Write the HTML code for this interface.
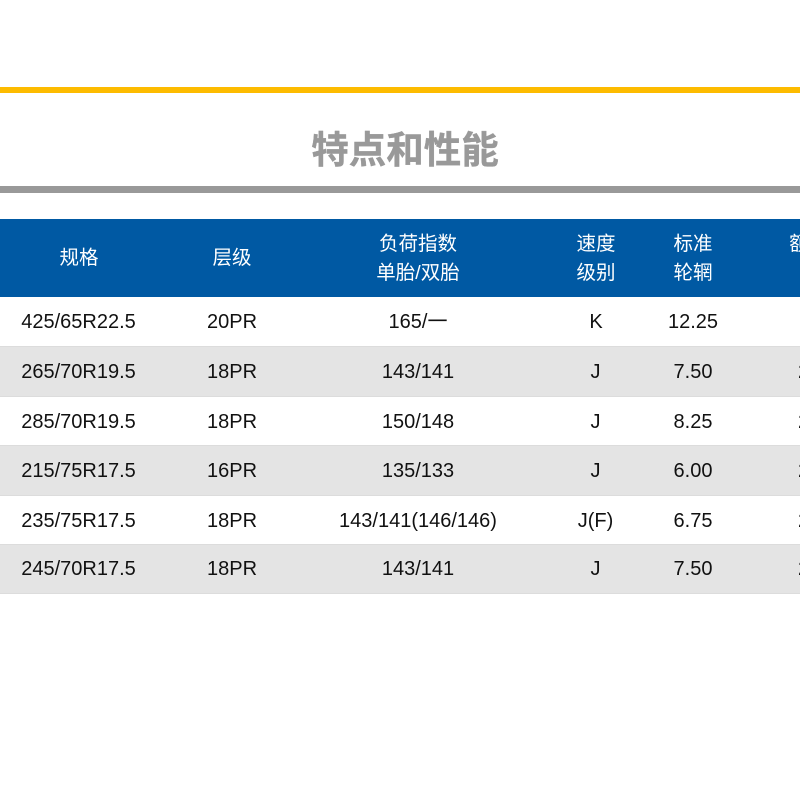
<!DOCTYPE html>
<html lang="zh">
<head>
<meta charset="utf-8">
<title>特点和性能</title>
<style>
html,body{margin:0;padding:0;background:#fff;}
body{width:800px;height:800px;overflow:hidden;position:relative;font-family:"Liberation Sans","Noto Sans CJK SC",sans-serif;}
.bar{position:absolute;left:0;width:800px;}
.title{position:absolute;left:0;width:810px;top:127px;height:46px;line-height:46px;text-align:center;font-size:37.5px;font-weight:bold;color:#999;-webkit-text-stroke:.4px #999;}
.row{position:absolute;left:0;width:800px;box-sizing:border-box;border-bottom:1px solid #dcdcdc;}
.g{background:#e4e4e4;}
.c{position:absolute;top:0;text-align:center;font-size:20px;color:#111;white-space:nowrap;transform:translateX(-50%);}
.e{position:absolute;top:0;left:798px;font-size:20px;color:#111;white-space:nowrap;}
.head{position:absolute;left:0;top:219px;width:800px;height:78px;background:#0059a3;}
.h{position:absolute;text-align:center;font-size:19.5px;line-height:29px;color:#fff;white-space:nowrap;transform:translateX(-50%);}
</style>
</head>
<body>
<div class="bar" style="top:87px;height:6px;background:#fdbb00;"></div>
<div class="title">特点和性能</div>
<div class="bar" style="top:186px;height:7px;background:#999;"></div>

<div class="head">
  <div class="h" style="left:79px;top:25px;">规格</div>
  <div class="h" style="left:232px;top:25px;">层级</div>
  <div class="h" style="left:418px;top:11px;">负荷指数<br>单胎/双胎</div>
  <div class="h" style="left:596px;top:11px;">速度<br>级别</div>
  <div class="h" style="left:693px;top:11px;">标准<br>轮辋</div>
  <div class="h" style="left:799px;top:11px;">额</div>
</div>

<div class="row" style="top:297px;height:50px;line-height:51px;">
  <div class="c" style="left:78.5px;">425/65R22.5</div><div class="c" style="left:232px;">20PR</div><div class="c" style="left:418px;">165/一</div><div class="c" style="left:596px;">K</div><div class="c" style="left:693px;">12.25</div>
</div>
<div class="row g" style="top:347px;height:50px;line-height:50px;">
  <div class="c" style="left:78.5px;">265/70R19.5</div><div class="c" style="left:232px;">18PR</div><div class="c" style="left:418px;">143/141</div><div class="c" style="left:595.5px;">J</div><div class="c" style="left:693px;">7.50</div><div class="e">2</div>
</div>
<div class="row" style="top:397px;height:49px;line-height:50px;">
  <div class="c" style="left:78.5px;">285/70R19.5</div><div class="c" style="left:232px;">18PR</div><div class="c" style="left:418px;">150/148</div><div class="c" style="left:595.5px;">J</div><div class="c" style="left:693px;">8.25</div><div class="e">2</div>
</div>
<div class="row g" style="top:446px;height:50px;line-height:50px;">
  <div class="c" style="left:78.5px;">215/75R17.5</div><div class="c" style="left:232px;">16PR</div><div class="c" style="left:418px;">135/133</div><div class="c" style="left:595.5px;">J</div><div class="c" style="left:693px;">6.00</div><div class="e">2</div>
</div>
<div class="row" style="top:496px;height:49px;line-height:50px;">
  <div class="c" style="left:78.5px;">235/75R17.5</div><div class="c" style="left:232px;">18PR</div><div class="c" style="left:418px;">143/141(146/146)</div><div class="c" style="left:595.5px;">J(F)</div><div class="c" style="left:693px;">6.75</div><div class="e">2</div>
</div>
<div class="row g" style="top:545px;height:49px;line-height:49px;">
  <div class="c" style="left:78.5px;">245/70R17.5</div><div class="c" style="left:232px;">18PR</div><div class="c" style="left:418px;">143/141</div><div class="c" style="left:595.5px;">J</div><div class="c" style="left:693px;">7.50</div><div class="e">2</div>
</div>
</body>
</html>
